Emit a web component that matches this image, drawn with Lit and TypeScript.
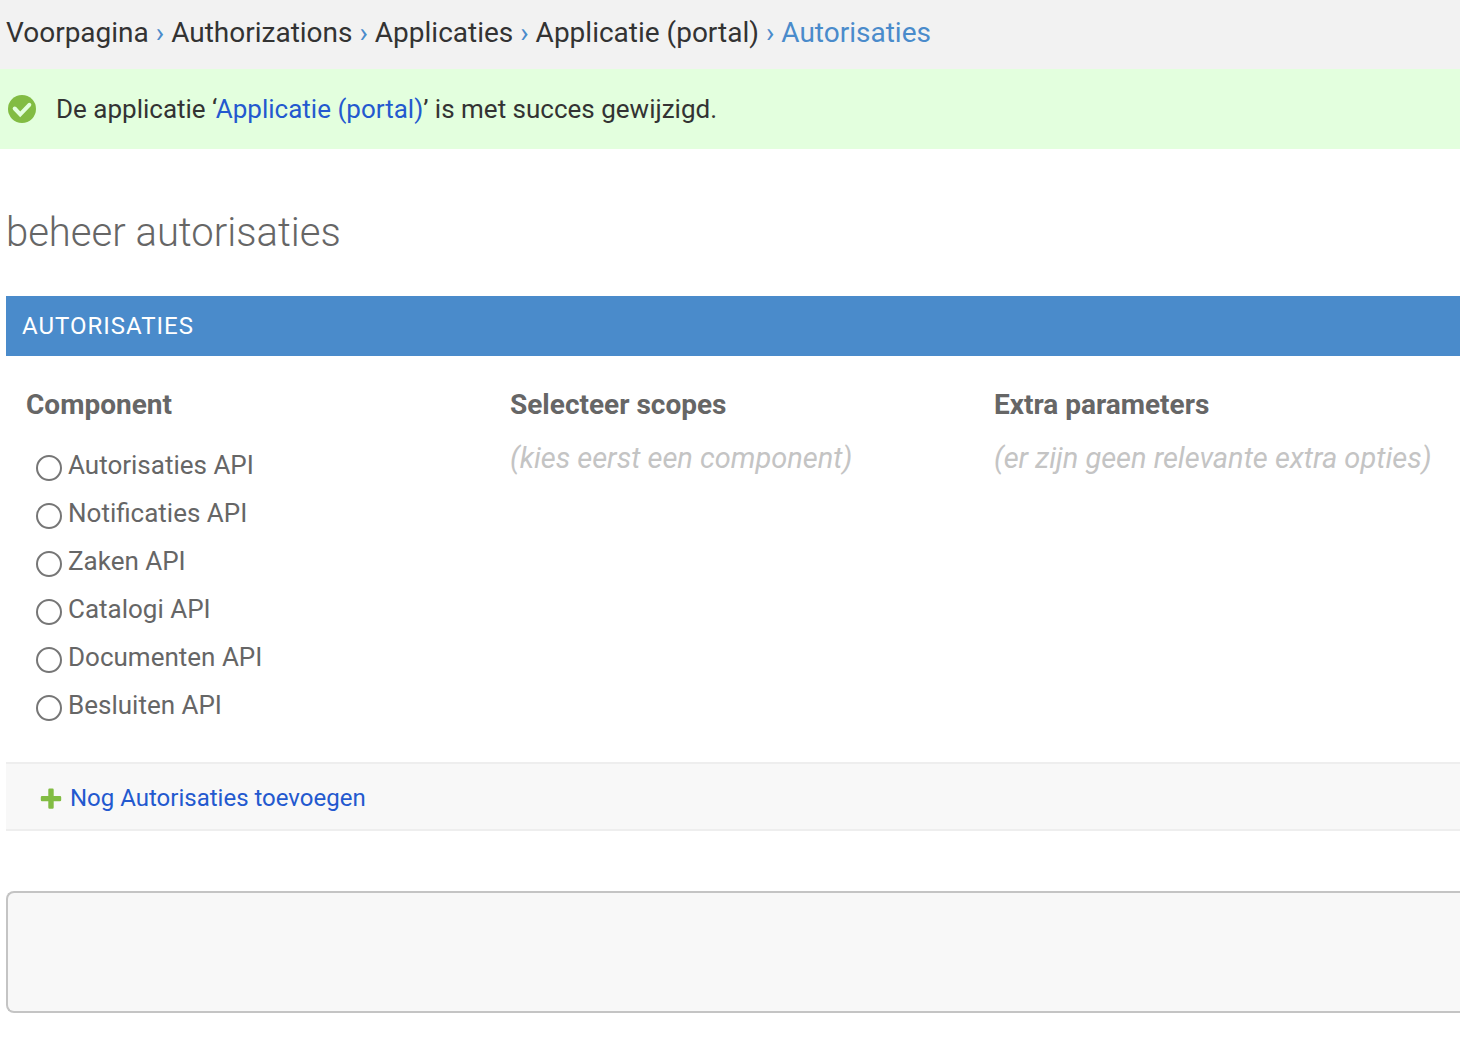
import { LitElement, html, css } from "lit";
import { customElement, state } from "lit/decorators.js";

const COMPONENTS = ["Autorisaties API", "Notificaties API", "Zaken API", "Catalogi API", "Documenten API", "Besluiten API"];
const CRUMBS = ["Voorpagina", "Authorizations", "Applicaties", "Applicatie (portal)"];

@customElement("app-root")
export class AppRoot extends LitElement {
  @state() private selected = "";

  static styles = css`
    :host { display: block; background: #fff; color: #666; font-family: Roboto, "Liberation Sans", sans-serif; font-size: 26px; line-height: 32px; overflow-x: hidden; }
    * { box-sizing: border-box; }
    a { color: #2359cf; text-decoration: none; }
    .crumbs { background: #f2f2f2; color: #4a8bcb; font-size: 28px; padding: 17px 6px 20px; }
    .crumbs a { color: #333; }
    .message { display: flex; align-items: center; gap: 20px; background: #e3ffde; color: #333; padding: 24px 8px; }
    .message svg { width: 28px; height: 28px; flex: none; }
    main { padding: 60px 0 0 6px; }
    h1 { margin: 0; font-size: 40px; font-weight: 300; line-height: 48px; color: #666; }
    .group { margin-top: 39px; }
    h2 { margin: 0; background: #4a8bcb; color: #fff; padding: 14px 16px; font-size: 24px; font-weight: 400; line-height: 32px; letter-spacing: 1px; text-transform: uppercase; }
    .columns { display: grid; grid-template-columns: repeat(3, minmax(0, 1fr)); padding: 33px 2px 33px 20px; gap: 20px; }
    h3 { margin: 0; font-size: 28px; font-weight: 700; line-height: 32px; }
    .hint { margin: 21px 0 0; font-size: 29px; font-style: italic; color: #c4c4c4; white-space: nowrap; }
    ul { list-style: none; margin: 20px 0 0; padding: 0 10px; }
    li { padding: 8px 0; }
    label { display: flex; gap: 6px; }
    input { appearance: none; width: 26px; height: 26px; margin: 6px 0 0; border: 2px solid #767676; border-radius: 50%; background: #fff; }
    input:checked { border-color: #4a8bcb; background: radial-gradient(#4a8bcb 45%, #fff 50%); }
    .add { display: flex; background: #f8f8f8; border: solid #eee; border-width: 2px 0; padding: 18px 34px 15px; font-size: 24px; line-height: 32px; }
    .add a { display: flex; align-items: center; gap: 8px; }
    .add svg { width: 22px; height: 22px; }
    .submit { margin-top: 60px; height: 122px; background: #f8f8f8; border: 2px solid #c4c4c4; border-right: 0; border-radius: 8px 0 0 8px; }
  `;

  render() {
    return html`
      <nav class="crumbs" aria-label="Kruimelpad">${CRUMBS.map((c) => html`<a href="#">${c}</a> › `)}<span>Autorisaties</span></nav>
      <div class="message" role="status">
        <svg viewBox="0 0 28 28" aria-hidden="true"><circle cx="14" cy="14" r="14" fill="#82bc43" /><path d="M6.700 13.500L12.200 19.300 21.300 9.800" fill="none" stroke="#e3ffde" stroke-width="4" stroke-linecap="round" /></svg>
        <span>De applicatie ‘<a href="#">Applicatie (portal)</a>’ is met succes gewijzigd.</span>
      </div>
      <main>
        <h1>beheer autorisaties</h1>
        <section class="group">
          <h2>Autorisaties</h2>
          <div class="columns">
            <div>
              <h3 id="component">Component</h3>
              <ul role="radiogroup" aria-labelledby="component">
                ${COMPONENTS.map((name, i) => html`<li><label for="c${i}"><input type="radio" id="c${i}" name="component" .checked=${this.selected === name} @change=${() => (this.selected = name)} />${name}</label></li>`)}
              </ul>
            </div>
            <div><h3>Selecteer scopes</h3><p class="hint">(kies eerst een component)</p></div>
            <div><h3>Extra parameters</h3><p class="hint">(er zijn geen relevante extra opties)</p></div>
          </div>
          <div class="add"><a href="#"><svg viewBox="0 0 22 22" aria-hidden="true"><path d="M9.500 1.500h3q1.200 0 1.200 1.200v6.300h6.300q1.200 0 1.200 1.200v2.800q0 1.200-1.200 1.200h-6.300v6.300q0 1.200-1.200 1.200h-3q-1.200 0-1.200-1.200v-6.300H2q-1.200 0-1.200-1.200v-2.800q0-1.200 1.200-1.200h6.300V2.700q0-1.200 1.200-1.200z" fill="#82bc43" /></svg>Nog Autorisaties toevoegen</a></div>
        </section>
        <div class="submit"></div>
      </main>
    `;
  }
}
